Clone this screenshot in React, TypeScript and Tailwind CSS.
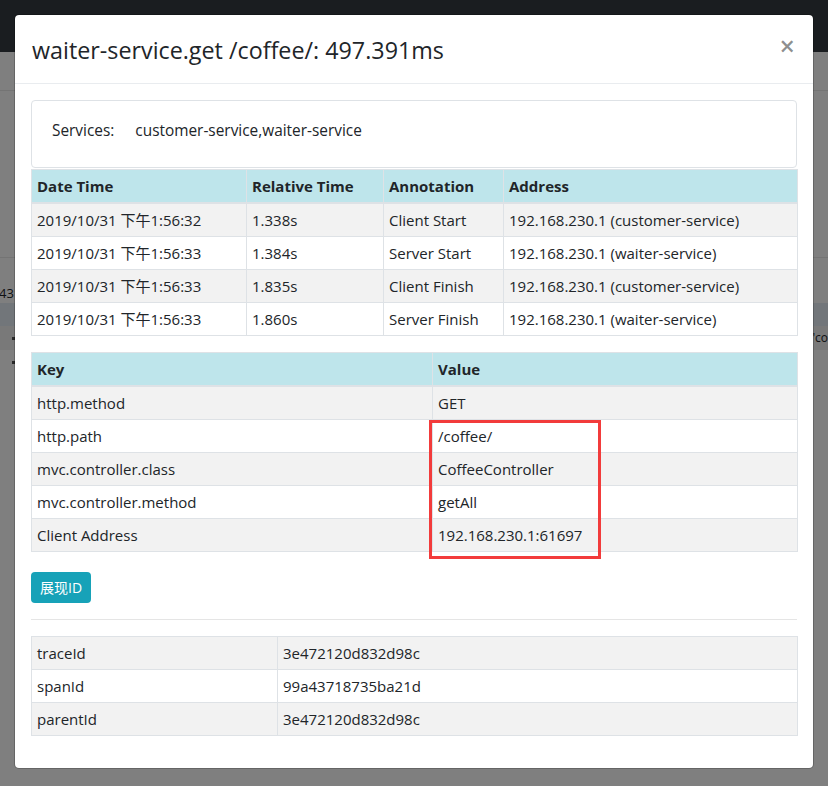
import React from "react";

const font = "font-['Open_Sans','Noto_Sans_CJK_SC',sans-serif]";

const spans = [
  ["2019/10/31 下午1:56:32", "1.338s", "Client Start", "192.168.230.1 (customer-service)"],
  ["2019/10/31 下午1:56:33", "1.384s", "Server Start", "192.168.230.1 (waiter-service)"],
  ["2019/10/31 下午1:56:33", "1.835s", "Client Finish", "192.168.230.1 (customer-service)"],
  ["2019/10/31 下午1:56:33", "1.860s", "Server Finish", "192.168.230.1 (waiter-service)"],
];

const tags = [
  ["http.method", "GET"],
  ["http.path", "/coffee/"],
  ["mvc.controller.class", "CoffeeController"],
  ["mvc.controller.method", "getAll"],
  ["Client Address", "192.168.230.1:61697"],
];

const ids = [
  ["traceId", "3e472120d832d98c"],
  ["spanId", "99a43718735ba21d"],
  ["parentId", "3e472120d832d98c"],
];

const th = "border border-[#dee2e6] border-b-2 pl-[5px] pr-1 py-[4px] leading-[24px] text-left font-bold whitespace-nowrap";
const td = "border border-[#dee2e6] pl-[5px] pr-1 py-[4px] leading-[24px] whitespace-nowrap";

export default function App() {
  return (
    <div className={`relative w-[828px] h-[786px] overflow-hidden bg-white ${font} text-[#212529]`}>
      {/* page behind */}
      <div className="h-[52px] bg-[#343a40]" />
      <div className="h-[39px] border-b border-[#e8e8e8]" />
      <div className="h-[167px] border-b border-[#e8e8e8]" />
      <div className="h-[45px] flex items-end pb-[2px]">
        <span className="text-[13px] leading-4 ml-[-1px]">431</span>
      </div>
      <div className="h-[23px] bg-[#e5edf5]" />
      <div className="h-[24px] flex items-center justify-between bg-[#f2f2f2]">
        <span className="ml-[12px] w-[3px] h-[3px] bg-[#555]" />
        <span className="text-[12px]">'co</span>
      </div>
      <div className="h-[24px] flex items-center">
        <span className="ml-[12px] w-[3px] h-[3px] bg-[#555]" />
      </div>

      {/* backdrop */}
      <div className="absolute inset-0 bg-black/50" />

      {/* modal */}
      <div className="absolute left-[14px] top-[14px] w-[800px] h-[755px] bg-white bg-clip-padding border border-black/20 rounded-[5px]">
        <div className="h-[69px] flex items-center justify-between pl-4 pr-4 border-b border-[#e9ecef]">
          <h4 className="text-[23.3px] font-medium leading-9 mt-[1px] ml-px">waiter-service.get /coffee/: 497.391ms</h4>
          <button className="text-[27px] font-semibold leading-none text-black/45 mr-[2px] mb-[8px]">×</button>
        </div>

        <div className="px-4 pt-4 text-[15px]">
          <div className="h-[68px] border border-[#dee2e6] rounded-[4px] flex items-center pl-5 pb-[6px] gap-[21px] text-[15.4px]">
            <span>Services:</span>
            <span>customer-service,waiter-service</span>
          </div>

          <table className="mt-px w-[766px] table-fixed border-collapse">
            <colgroup>
              <col className="w-[215px]" />
              <col className="w-[137px]" />
              <col className="w-[120px]" />
              <col className="w-[294px]" />
            </colgroup>
            <thead>
              <tr className="bg-[#bee5eb]">
                <th className={th}>Date Time</th>
                <th className={th}>Relative Time</th>
                <th className={th}>Annotation</th>
                <th className={th}>Address</th>
              </tr>
            </thead>
            <tbody>
              {spans.map((r, i) => (
                <tr key={i} className={i % 2 === 0 ? "bg-[#f2f2f2]" : "bg-white"}>
                  {r.map((c, j) => (
                    <td key={j} className={td}>{c}</td>
                  ))}
                </tr>
              ))}
            </tbody>
          </table>

          <div className="relative mt-4">
            <table className="w-[766px] table-fixed border-collapse">
              <colgroup>
                <col className="w-[401px]" />
                <col className="w-[365px]" />
              </colgroup>
              <thead>
                <tr className="bg-[#bee5eb]">
                  <th className={th}>Key</th>
                  <th className={th}>Value</th>
                </tr>
              </thead>
              <tbody>
                {tags.map((r, i) => (
                  <tr key={i} className={i % 2 === 0 ? "bg-[#f2f2f2]" : "bg-white"}>
                    <td className={td}>{r[0]}</td>
                    <td className={td}>{r[1]}</td>
                  </tr>
                ))}
              </tbody>
            </table>
            <div className="absolute left-[398px] top-[68px] w-[172px] h-[139px] border-[3px] border-[#f23b3b]" />
          </div>

          <button className="mt-[20px] h-[31px] px-[9px] rounded-[4px] bg-[#17a2b8] text-white text-[14px] leading-[21px]">
            展现ID
          </button>

          <hr className="mt-4 border-0 border-t border-black/10" />

          <table className="mt-4 w-[766px] table-fixed border-collapse">
            <colgroup>
              <col className="w-[246px]" />
              <col className="w-[520px]" />
            </colgroup>
            <tbody>
              {ids.map((r, i) => (
                <tr key={i} className={i % 2 === 0 ? "bg-[#f2f2f2]" : "bg-white"}>
                  <td className={td}>{r[0]}</td>
                  <td className={td}>{r[1]}</td>
                </tr>
              ))}
            </tbody>
          </table>
        </div>
      </div>
    </div>
  );
}
